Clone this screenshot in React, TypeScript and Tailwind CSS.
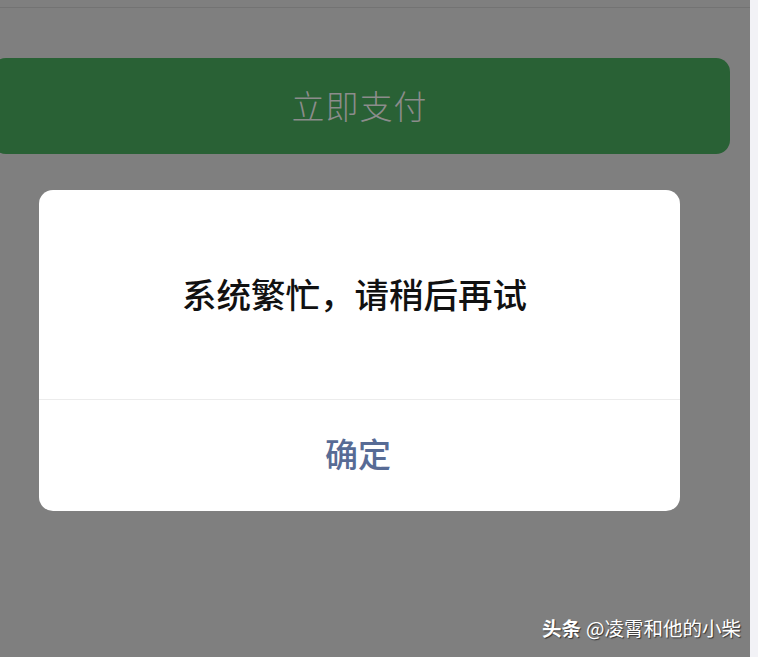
import React from "react";

export default function App() {
  const cjk = { fontFamily: '"Noto Sans CJK SC", "Noto Sans", sans-serif' };
  return (
    <div className="w-[758px] h-[657px] flex overflow-hidden" style={cjk}>
      <div className="relative w-[750px] h-full bg-[#7f7f7f] flex flex-col">
        <div className="h-[7px] shrink-0" />
        <div className="h-px shrink-0 bg-[#737373]" />
        <div className="ml-[-8px] mt-[50px] w-[738px] h-[96px] shrink-0 rounded-[14px] bg-[#296135] flex items-center justify-center">
          <span className="text-[33px] font-light text-[#8c8c8c] tracking-[1px] leading-none pr-[3px] pb-[2px]">立即支付</span>
        </div>
        <div className="ml-[39px] mt-[36px] w-[641px] h-[321px] shrink-0 rounded-[14px] bg-white flex flex-col overflow-hidden">
          <div className="h-[209px] flex items-center justify-center">
            <span className="text-[34.5px] font-medium text-[#111111] leading-none pr-[10px] pb-[3px]">系统繁忙，请稍后再试</span>
          </div>
          <div className="h-px bg-[#ececec]" />
          <div className="flex-1 flex items-center justify-center">
            <span className="text-[33px] font-medium text-[#576b95] leading-none pb-[4px] pr-[3px]">确定</span>
          </div>
        </div>
        <div className="absolute right-[9px] top-[618px] flex items-center text-[19.5px] text-white leading-none [text-shadow:1px_1px_1px_rgba(0,0,0,0.6)]">
          <span className="font-bold">头条</span>
          <span className="ml-[5px]">@凌霄和他的小柴</span>
        </div>
      </div>
      <div className="w-[8px] h-full bg-[#f2f2f6]" />
    </div>
  );
}
